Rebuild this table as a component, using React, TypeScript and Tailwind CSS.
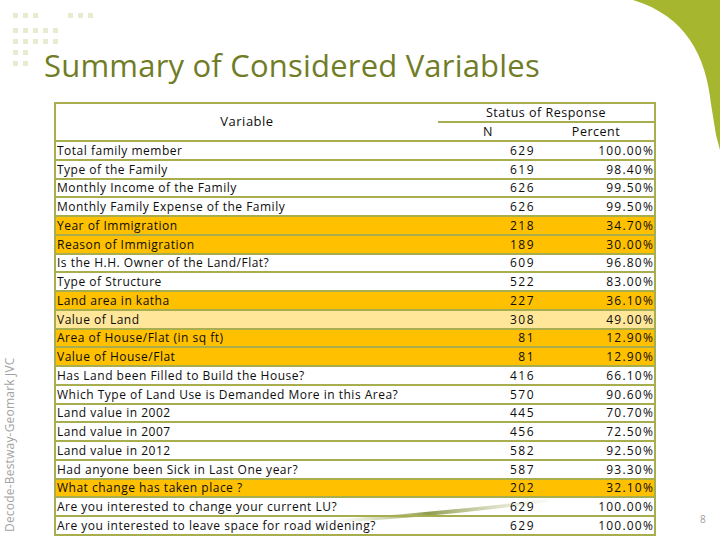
import React from "react";

type Row = { label: string; n: string; pct: string; tone?: "hi" | "soft" };

const rows: Row[] = [
  { label: "Total family member", n: "629", pct: "100.00%" },
  { label: "Type of the Family", n: "619", pct: "98.40%" },
  { label: "Monthly Income of the Family", n: "626", pct: "99.50%" },
  { label: "Monthly Family Expense of the Family", n: "626", pct: "99.50%" },
  { label: "Year of Immigration", n: "218", pct: "34.70%", tone: "hi" },
  { label: "Reason of Immigration", n: "189", pct: "30.00%", tone: "hi" },
  { label: "Is the H.H. Owner of the Land/Flat?", n: "609", pct: "96.80%" },
  { label: "Type of Structure", n: "522", pct: "83.00%" },
  { label: "Land area in katha", n: "227", pct: "36.10%", tone: "hi" },
  { label: "Value of Land", n: "308", pct: "49.00%", tone: "soft" },
  { label: "Area of House/Flat (in sq ft)", n: "81", pct: "12.90%", tone: "hi" },
  { label: "Value of House/Flat", n: "81", pct: "12.90%", tone: "hi" },
  { label: "Has Land been Filled to Build the House?", n: "416", pct: "66.10%" },
  { label: "Which Type of Land Use is Demanded More in this Area?", n: "570", pct: "90.60%" },
  { label: "Land value in 2002", n: "445", pct: "70.70%" },
  { label: "Land value in 2007", n: "456", pct: "72.50%" },
  { label: "Land value in 2012", n: "582", pct: "92.50%" },
  { label: "Had anyone been Sick in Last One year?", n: "587", pct: "93.30%" },
  { label: "What change has taken place ?", n: "202", pct: "32.10%", tone: "hi" },
  { label: "Are you interested to change your current LU?", n: "629", pct: "100.00%" },
  { label: "Are you interested to leave space for road widening?", n: "629", pct: "100.00%" },
];

const Sq = () => <div className="w-[5px] h-[5px] bg-[#e8ebcf]" />;

const Dots = () => (
  <div className="absolute left-[13px] top-[13px] flex flex-col">
    <div className="flex gap-[5px]">
      <Sq /><Sq /><Sq />
      <div className="w-[20px]" />
      <Sq /><Sq /><Sq />
    </div>
    <div className="flex gap-[5px] mt-[10px]">
      <Sq /><Sq /><Sq /><Sq /><Sq />
    </div>
    <div className="flex gap-[5px] mt-[6px]">
      <Sq /><Sq /><Sq /><Sq /><Sq />
    </div>
    <div className="flex gap-[5px] mt-[6px]">
      <Sq /><Sq />
    </div>
    <div className="flex gap-[5px] mt-[6px]">
      <Sq /><Sq />
    </div>
  </div>
);

export default function App() {
  return (
    <div className="relative w-[720px] h-[540px] bg-white overflow-hidden font-['Open_Sans',sans-serif]">
      <Dots />

      {/* corner swoosh */}
      <svg className="absolute right-0 top-0" width="90" height="160" viewBox="630 0 90 160">
        <path d="M633 0 C686 16 706 56 711 104 L716 135 L720 150 L720 0 Z" fill="#a6b62f" />
      </svg>

      {/* background streak behind the bottom rows */}
      <svg className="absolute left-0 top-0" width="720" height="540">
        <defs>
          <linearGradient id="streak" x1="0" x2="1" y1="0" y2="0">
            <stop offset="0" stopColor="#c9d19a" stopOpacity="0" />
            <stop offset="0.45" stopColor="#8f9b4e" />
            <stop offset="1" stopColor="#dfe4c4" stopOpacity="0.2" />
          </linearGradient>
        </defs>
        <path d="M330 520 Q440 512 548 499 L548 502 Q440 517 330 523 Z" fill="url(#streak)" />
      </svg>

      <div className="absolute left-[2px] bottom-[8px] origin-bottom-left -rotate-90 translate-x-[14px] text-[12px] leading-[13px] text-[#a3a3a3] whitespace-nowrap tracking-[0.2px]">
        Decode-Bestway-Geomark JVC
      </div>
      <div className="absolute left-[700px] top-[512px] text-[10px] text-[#a0a0a0]">8</div>

      <div className="relative pl-[44px] pt-[45px]">
        <h1 className="text-[31px] leading-[40px] text-[#717d26] font-normal tracking-[0.2px]">
          Summary of Considered Variables
        </h1>
      </div>

      <div className="relative ml-[54px] mt-[17px] w-[600px]">
        <table className="w-full border-collapse text-[12px] text-[#0d0d0d] tracking-[0.5px] table-fixed">
          <colgroup>
            <col className="w-[383px]" />
            <col className="w-[100px]" />
            <col className="w-[117px]" />
          </colgroup>
          <thead>
            <tr className="h-[19px]">
              <th rowSpan={2} className="border-l-2 border-t-2 border-b-2 border-[#a8ad4e] font-normal text-[13px] text-center align-middle">
                Variable
              </th>
              <th colSpan={2} className="border-t-2 border-r-2 border-b-2 border-[#a8ad4e] font-normal text-[12.5px] text-center leading-[16px]">
                Status of Response
              </th>
            </tr>
            <tr className="h-[19px]">
              <th className="border-b-2 border-[#a8ad4e] font-normal text-[12.5px] text-center leading-[16px]">N</th>
              <th className="border-b-2 border-r-2 border-[#a8ad4e] font-normal text-[12.5px] text-center leading-[16px]">Percent</th>
            </tr>
          </thead>
          <tbody>
            {rows.map((r) => {
              const bg = r.tone === "hi" ? "bg-[#ffc000]" : r.tone === "soft" ? "bg-[#ffe699]" : "";
              return (
                <tr key={r.label} className={`h-[18.75px] ${bg}`}>
                  <td className="border-l-2 border-b-2 border-[#a8ad4e] pl-[1px] leading-[15px] whitespace-nowrap">{r.label}</td>
                  <td className="border-b-2 border-[#a8ad4e] pr-[3px] text-right leading-[15px] tracking-[1.5px]">{r.n}</td>
                  <td className="border-b-2 border-r-2 border-[#a8ad4e] text-right leading-[15px] tracking-[1.2px]">{r.pct}</td>
                </tr>
              );
            })}
          </tbody>
        </table>
      </div>
    </div>
  );
}
